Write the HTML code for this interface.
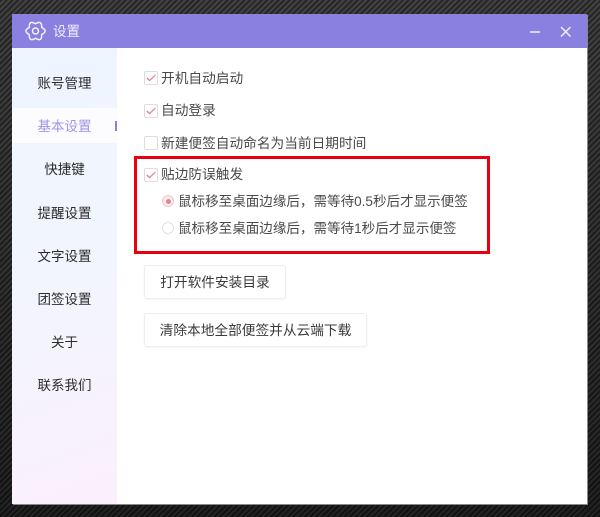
<!DOCTYPE html>
<html lang="zh">
<head>
<meta charset="utf-8">
<style>
html,body{margin:0;padding:0}
body{width:600px;height:517px;overflow:hidden;position:relative;font-family:"Liberation Sans","Noto Sans CJK SC",sans-serif;
background:linear-gradient(180deg,#3c3c3c 0%,#2c2c2c 50%,#1c1c1c 100%)}
.stripes{position:absolute;inset:0;background:repeating-linear-gradient(135deg,rgba(0,0,0,.36) 0 2px,rgba(255,255,255,.03) 2px 4px)}
.abs{position:absolute}
.win{position:absolute;left:12px;top:14px;width:575px;height:490px;background:#fff;box-shadow:1px 1px 0 #888}
.title{position:absolute;left:12px;top:14px;width:575px;height:34px;background:#8a80e0}
.tt{position:absolute;left:53px;top:22px;line-height:20px;font-size:13.5px;color:#f1effc}
.side{position:absolute;left:12px;top:48px;width:105px;height:456px;background:linear-gradient(160deg,#eef5ff 0%,#f2f5fe 50%,#fbf0fb 100%)}
.band{position:absolute;left:12px;top:108px;width:105px;height:35px;background:#fcfcff}
.mark{position:absolute;left:115px;top:121px;width:2px;height:10px;background:#8a80e0}
.nav{position:absolute;left:12px;width:105px;text-align:center;font-size:13.5px;line-height:20px;color:#2b2b2b}
.nav.on{color:#9d95e4}
.row{position:absolute;font-size:13.7px;line-height:20px;color:#4a4a4a;white-space:nowrap}
.row.s{font-size:13.55px}
.cb{position:absolute;left:144px;width:12px;height:12px;border:1px solid #ddd;border-radius:2px;background:#fff}
.cb svg{position:absolute;left:0;top:0}
.rd{position:absolute;left:162px;width:10px;height:10px;border:1px solid #e2dede;border-radius:50%;background:#fff}
.rd.on{border-color:#efc6cc;background:#fbeef0}
.rd.on:after{content:"";position:absolute;left:2.5px;top:2.5px;width:5px;height:5px;border-radius:50%;background:#e8828f}
.red{position:absolute;left:134px;top:156px;width:350px;height:92px;border:3.5px solid #e8000e}
.btn{position:absolute;box-sizing:border-box;height:34px;background:#fff;border:1px solid #eee;border-radius:3px;box-shadow:0 1px 2px rgba(0,0,0,.05);font-size:13.7px;line-height:34px;color:#3a3a3a;text-align:center;white-space:nowrap}
</style>
</head>
<body>
<div class="stripes"></div>
<div class="win"></div>
<div class="title"></div>
<svg class="abs" style="left:25px;top:20px" width="22" height="22" viewBox="0 0 22 22" fill="none" stroke="#f3f1fd" stroke-width="1.5" stroke-linejoin="round">
<path d="M10.500 3.800Q17 -.3 16.700 7.400Q23.500 11 16.700 14.600Q17 22.300 10.500 18.200Q4 22.300 4.300 14.600Q-2.500 11 4.300 7.400Q4 -.3 10.500 3.800Z"/>
<circle cx="10.500" cy="11" r="3"/>
</svg>
<div class="tt">设置</div>
<svg class="abs" style="left:528px;top:24px" width="48" height="16" viewBox="0 0 48 16" fill="none" stroke="#f3f1fd" stroke-width="1.500">
<path d="M2 8h10"/>
<path d="M33 3l9.500 9.500M42.500 3L33 12.500"/>
</svg>

<div class="side"></div>
<div class="band"></div>
<div class="mark"></div>
<div class="nav" style="top:74px">账号管理</div>
<div class="nav on" style="top:117px">基本设置</div>
<div class="nav" style="top:160px">快捷键</div>
<div class="nav" style="top:204px">提醒设置</div>
<div class="nav" style="top:247px">文字设置</div>
<div class="nav" style="top:290px">团签设置</div>
<div class="nav" style="top:333px">关于</div>
<div class="nav" style="top:376px">联系我们</div>

<div class="cb" style="top:71px"><svg width="12" height="12" viewBox="0 0 12 12" fill="none" stroke="#e8788a" stroke-width="1.200"><path d="M1.800 6l2.800 2.600L10.400 3"/></svg></div>
<div class="row" style="left:161px;top:69px">开机自动启动</div>
<div class="cb" style="top:104px"><svg width="12" height="12" viewBox="0 0 12 12" fill="none" stroke="#e8788a" stroke-width="1.200"><path d="M1.800 6l2.800 2.600L10.400 3"/></svg></div>
<div class="row" style="left:161px;top:101px">自动登录</div>
<div class="cb" style="top:136px"></div>
<div class="row" style="left:161px;top:134px">新建便签自动命名为当前日期时间</div>
<div class="cb" style="top:168px"><svg width="12" height="12" viewBox="0 0 12 12" fill="none" stroke="#e8788a" stroke-width="1.200"><path d="M1.800 6l2.800 2.600L10.400 3"/></svg></div>
<div class="row" style="left:161px;top:165px">贴边防误触发</div>

<div class="rd on" style="top:195px"></div>
<div class="row s" style="left:178px;top:192px">鼠标移至桌面边缘后，需等待0.5秒后才显示便签</div>
<div class="rd" style="top:222px"></div>
<div class="row s" style="left:178px;top:219px">鼠标移至桌面边缘后，需等待1秒后才显示便签</div>

<div class="red"></div>

<div class="btn" style="left:144px;top:265px;width:142px">打开软件安装目录</div>
<div class="btn" style="left:144px;top:313px;width:223px">清除本地全部便签并从云端下载</div>
</body>
</html>
